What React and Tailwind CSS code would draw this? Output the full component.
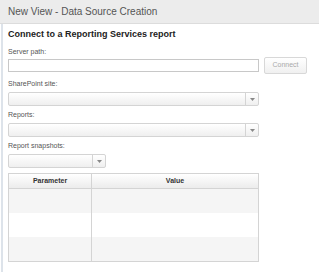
export default function App() {
  const Select = ({ width }) => (
    <div className={`flex h-[14px] ${width} rounded-[2px] border border-[#d4d4d4] bg-gradient-to-b from-white to-[#efefef]`}>
      <div className="flex-1" />
      <div className="flex w-[13px] items-center justify-center border-l border-[#d4d4d4]">
        <svg width="5" height="3" viewBox="0 0 5 3">
          <path d="M0 0h5L2.5 3z" fill="#888" />
        </svg>
      </div>
    </div>
  );

  const Label = ({ children, className }) => (
    <div className={`h-[10px] text-[7px] leading-[10px] text-[#555] ${className}`}>{children}</div>
  );

  return (
    <div
      className="w-[319px] h-[272px] bg-white overflow-hidden"
      style={{ fontFamily: '"Liberation Sans", Arial, sans-serif' }}
    >
      {/* Title bar */}
      <div className="h-[24px] bg-[#ececec] border-b border-[#dcdcdc] flex items-center pl-[8px] text-[10px] text-[#555]">
        New View - Data Source Creation
      </div>

      <div className="flex">
        <div className="w-[2px] ml-[1px] h-[248px] bg-[#dde3ea]" />
        <div className="flex-1 pl-[5px] pt-[5px]">
          <div className="h-[10px] text-[9px] font-bold text-[#222] leading-[10px]">
            Connect to a Reporting Services report
          </div>

          <Label className="mt-[8px]">Server path:</Label>
          <div className="flex h-[17px] items-center gap-[5px]">
            <div className="h-[13px] w-[251px] border border-[#c8c8c8] bg-white" />
            <div className="flex h-[17px] w-[43px] items-center justify-center rounded-[2px] border border-[#d8d8d8] bg-gradient-to-b from-white to-[#f0f0f0] text-[7px] text-[#aaa]">
              Connect
            </div>
          </div>

          <Label className="mt-[5px]">SharePoint site:</Label>
          <div className="mt-[3px]">
            <Select width="w-[251px]" />
          </div>

          <Label className="mt-[4px]">Reports:</Label>
          <div className="mt-[3px]">
            <Select width="w-[251px]" />
          </div>

          <Label className="mt-[4px]">Report snapshots:</Label>
          <div className="mt-[3px]">
            <Select width="w-[98px]" />
          </div>

          {/* Parameter table */}
          <div className="mt-[5px] w-[251px] border border-[#d4d4d4]">
            <div className="flex h-[15px] bg-gradient-to-b from-white to-[#ececec] border-b border-[#d4d4d4] text-[7px] font-bold text-[#333]">
              <div className="w-[83px] flex items-center justify-center border-r border-[#d4d4d4]">Parameter</div>
              <div className="flex-1 flex items-center justify-center">Value</div>
            </div>
            {["bg-[#f5f5f5]", "bg-white", "bg-[#f5f5f5]"].map((bg, i) => (
              <div key={i} className={`flex h-[24px] ${bg}`}>
                <div className="w-[83px] border-r border-[#d4d4d4]" />
                <div className="flex-1" />
              </div>
            ))}
          </div>
        </div>
      </div>
    </div>
  );
}
